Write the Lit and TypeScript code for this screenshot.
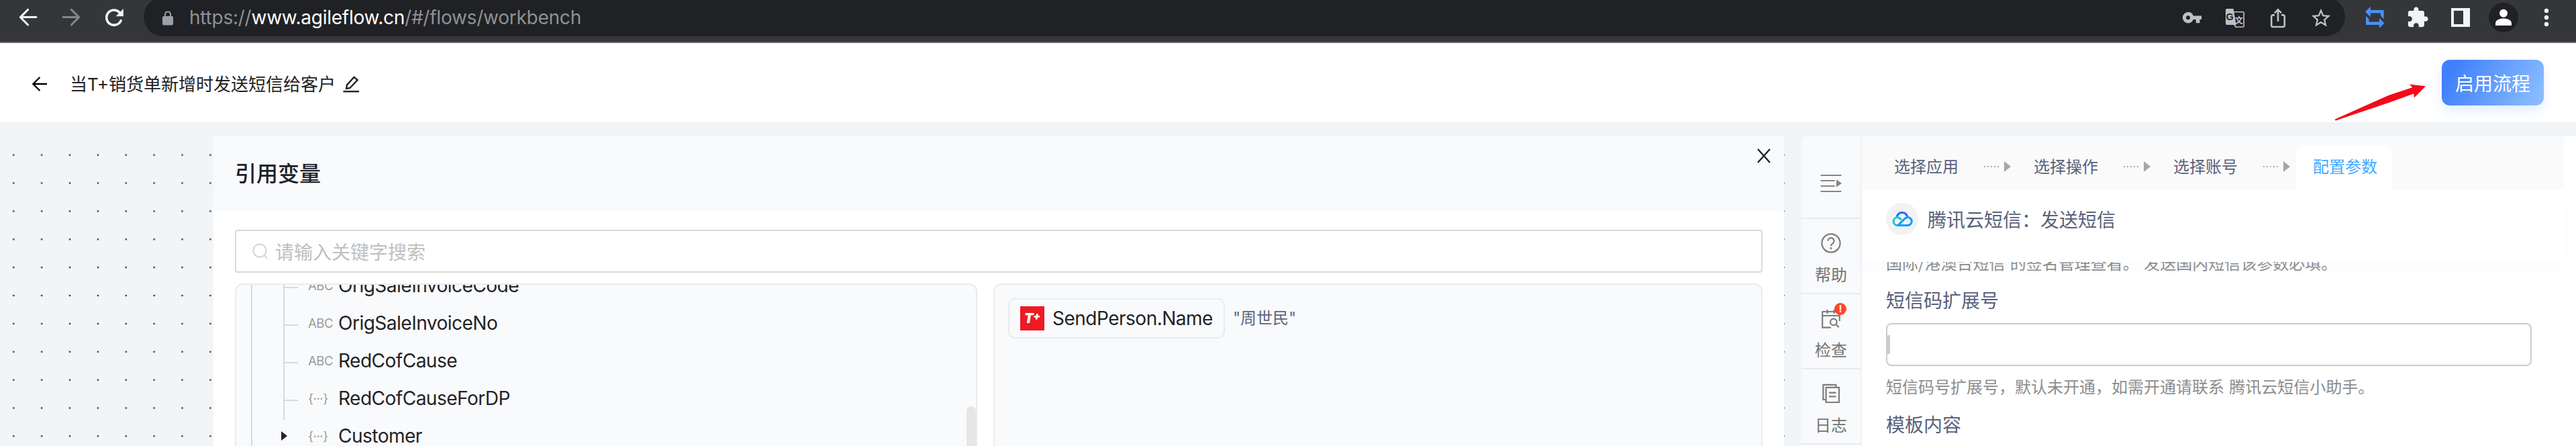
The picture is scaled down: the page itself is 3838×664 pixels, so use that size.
import { html, css, svg, LitElement } from "lit";
import { customElement, property } from "lit/decorators.js";
import { classMap } from "lit/directives/class-map.js";

const fields = [
  { type: "ABC", name: "OrigSaleInvoiceCode" },
  { type: "ABC", name: "OrigSaleInvoiceNo" },
  { type: "ABC", name: "RedCofCause" },
  { type: "{···}", name: "RedCofCauseForDP" },
];

const steps = ["选择应用", "选择操作", "选择账号", "配置参数"];

const helpIcon = svg`
  <circle cx="16" cy="16" r="13.6" />
  <path d="M11.6 12.8a4.5 4.5 0 1 1 7 3.6c-1.6 1.1-2.6 1.8-2.6 3.8" />
  <circle cx="16" cy="23.4" r="1.5" fill="currentColor" stroke="none" />
`;

const checkIcon = svg`
  <path d="M16 29.6H3.2V6H28.8V20" />
  <path d="M3.2 12H28.8M10.6 3V9M20.6 3V9" />
  <circle cx="19.8" cy="21.4" r="4.8" />
  <path d="M23.4 25l4.4 4.2" />
`;

const logIcon = svg`
  <path d="M8 25H4.4V2.9H23.4V6.6" />
  <path d="M8.6 6.9H28V29H8.6z" />
  <path d="M13 14.6H23.4M13 20.4H23.4" />
`;

@customElement("browser-bar")
export class BrowserBar extends LitElement {
  static styles = css`
    :host {
      display: flex;
      align-items: flex-start;
      box-sizing: border-box;
      height: 64px;
      background: #35363a;
      border-bottom: 2px solid #5f6064;
      color: #f1f3f4;
    }
    svg {
      display: block;
      fill: currentColor;
    }
    .nav {
      display: flex;
      gap: 32px;
      width: 188px;
      padding: 10px 0 0 26px;
    }
    .nav svg {
      width: 32px;
      height: 32px;
      fill: none;
      stroke: currentColor;
      stroke-width: 3;
      stroke-linecap: round;
      stroke-linejoin: round;
    }
    .disabled {
      color: #85868a;
    }
    .address {
      display: flex;
      align-items: center;
      box-sizing: border-box;
      width: 3280px;
      height: 58px;
      margin-top: -4px;
      padding: 0 19px 0 28px;
      border-radius: 29px;
      background: #202124;
      color: #bdc1c6;
    }
    .lock {
      width: 16px;
      height: 22px;
      margin-top: 4px;
      color: #9aa0a6;
    }
    .url {
      flex: 1;
      padding: 2px 0 0 24px;
      font: 28px/40px Inter, "Liberation Sans", sans-serif;
      letter-spacing: -0.24px;
      color: #8e9196;
    }
    .url b {
      font-weight: 400;
      color: #fff;
    }
    .actions,
    .extensions {
      display: flex;
      align-items: center;
      gap: 30px;
    }
    .actions {
      margin-top: 3px;
    }
    .extensions {
      height: 52px;
      padding-left: 27px;
    }
    .actions svg,
    .extensions svg {
      width: 34px;
      height: 34px;
    }
    .sync {
      color: #4a90f7;
    }
    .avatar {
      display: flex;
      align-items: center;
      justify-content: center;
      width: 44px;
      height: 44px;
      margin: 0 -5px;
      border-radius: 50%;
      background: #202124;
      color: #fff;
    }
    text {
      font-family: "Liberation Sans", "Noto Sans CJK SC", sans-serif;
      font-weight: 700;
    }
  `;

  render() {
    return html`
      <div class="nav">
        <svg viewBox="0 0 32 32">
          <path d="M28 15.6H4.6M15.6 4.4L4.4 15.6L15.6 27" />
        </svg>
        <svg class="disabled" viewBox="0 0 32 32">
          <path d="M4 15.6H27.4M16.4 4.4L27.6 15.6L16.4 27" />
        </svg>
        <svg viewBox="0 0 32 32">
          <path stroke-width="3.6" d="M26.2 20.6A11.2 11.2 0 1 1 24 8.4" />
          <path fill="currentColor" stroke="none" d="M29.8 3v11.2H18.6z" />
        </svg>
      </div>
      <div class="address">
        <svg class="lock" viewBox="0 0 16 22">
          <path
            d="M2 8h1V5.4a5 5 0 0 1 10 0V8h1a2 2 0 0 1 2 2v9.4a2 2 0 0 1-2 2H2a2 2 0 0 1-2-2V10a2 2 0 0 1 2-2zM5 8h6V5.4a3 3 0 0 0-6 0z"
          />
        </svg>
        <div class="url">https://<b>www.agileflow.cn</b>/#/flows/workbench</div>
        <div class="actions">
          <svg viewBox="0 0 34 34">
            <path
              fill-rule="evenodd"
              d="M11 8a8.2 8.2 0 0 1 7.8 5.4H31v5.6h-2.6v5.2h-5.6V19h-4A8.2 8.2 0 1 1 11 8zm0 5.2a3 3 0 1 0 0 6 3 3 0 0 0 0-6z"
            />
          </svg>
          <svg viewBox="0 0 34 34">
            <path d="M5 3h9.5l4.2 24H5a2 2 0 0 1-2-2V5a2 2 0 0 1 2-2z" />
            <path
              fill="none"
              stroke="currentColor"
              stroke-width="1.6"
              d="M15 7.8H28.4a1.8 1.8 0 0 1 1.8 1.8V28.4a1.8 1.8 0 0 1-1.8 1.8H18L15.6 26"
            />
            <text x="3.6" y="19.6" font-size="14.5" fill="#202124">G</text>
            <text x="16.4" y="24.6" font-size="12.5">文</text>
          </svg>
          <svg viewBox="0 0 34 34">
            <path
              fill="none"
              stroke="currentColor"
              stroke-width="2.6"
              d="M12 12.4H9.4a2.2 2.2 0 0 0-2.2 2.2V27.8a2.2 2.2 0 0 0 2.2 2.2H24.6a2.2 2.2 0 0 0 2.2-2.2V14.6a2.2 2.2 0 0 0-2.2-2.2H22M17 22V5M12 9.4l5-5 5 5"
            />
          </svg>
          <svg viewBox="0 0 24 24">
            <path
              d="M22 9.24l-7.19-.62L12 2 9.19 8.63 2 9.24l5.46 4.73L5.82 21 12 17.27 18.18 21l-1.63-7.03L22 9.24zM12 15.4l-3.76 2.27 1-4.28-3.32-2.88 4.38-.38L12 6.1l1.71 4.04 4.38.38-3.32 2.88 1 4.28L12 15.4z"
            />
          </svg>
        </div>
      </div>
      <div class="extensions">
        <svg class="sync" viewBox="0 0 34 34">
          <path d="M3 8.6L10.8 1V6H30.6V19.6L26 14.6V10.6H10.8V16.4z" />
          <path d="M31.4 25.6L24 33V28H4V14.6L8.6 19.4V23.4H24V18z" />
        </svg>
        <svg viewBox="0 0 24 24">
          <path
            d="M20.5 11H19V7c0-1.1-.9-2-2-2h-4V3.5C13 2.12 11.88 1 10.5 1S8 2.12 8 3.5V5H4c-1.1 0-1.99.9-1.99 2v3.8H3.5c1.49 0 2.7 1.21 2.7 2.7s-1.21 2.7-2.7 2.7H2V20c0 1.1.9 2 2 2h3.8v-1.5c0-1.49 1.21-2.7 2.7-2.7 1.49 0 2.7 1.21 2.7 2.7V22H17c1.1 0 2-.9 2-2v-4h1.5c1.38 0 2.5-1.12 2.5-2.5S21.88 11 20.5 11z"
          />
        </svg>
        <svg viewBox="0 0 34 34">
          <path fill-rule="evenodd" d="M3 3H31V31H3zM7 7V27H21V7z" />
        </svg>
        <div class="avatar">
          <svg viewBox="0 0 34 34">
            <circle cx="17" cy="10.8" r="6" />
            <path d="M5 29V25.6C5 21 11.4 18.6 17 18.6S29 21 29 25.6V29z" />
          </svg>
        </div>
        <svg viewBox="0 0 34 34">
          <circle cx="17" cy="7" r="3.2" />
          <circle cx="17" cy="17" r="3.2" />
          <circle cx="17" cy="27" r="3.2" />
        </svg>
      </div>
    `;
  }
}

@customElement("flow-header")
export class FlowHeader extends LitElement {
  static styles = css`
    :host {
      position: relative;
      display: flex;
      align-items: center;
      box-sizing: border-box;
      height: 118px;
      padding: 0 48px 0 46px;
      background: #fff;
      color: #222;
    }
    svg {
      display: block;
      fill: none;
      stroke: currentColor;
      stroke-width: 2.4;
    }
    .back {
      width: 26px;
      height: 26px;
      margin-top: 3px;
      color: #000;
    }
    .title {
      padding: 5px 10px 0 32px;
      font: 26px/36px Inter, "Noto Sans CJK SC", sans-serif;
    }
    .edit {
      width: 26px;
      height: 26px;
      margin-top: 4px;
    }
    .enable {
      width: 152px;
      height: 68px;
      margin-left: auto;
      padding: 0;
      border: 0;
      border-radius: 12px;
      background: linear-gradient(118deg, #4080fb 12%, #88bbff 92%);
      box-shadow: 0 8px 16px rgba(64, 128, 255, 0.14);
      font: 28px/64px "Noto Sans CJK SC", sans-serif;
      color: #fff;
    }
    .pointer {
      position: absolute;
      left: 3476px;
      top: 60px;
      width: 142px;
      height: 58px;
      fill: #f50a1a;
      stroke: none;
    }
  `;

  render() {
    return html`
      <svg class="back" viewBox="0 0 26 26">
        <path d="M24 13H3.6M13.4 3L3.4 13L13.4 23" />
      </svg>
      <div class="title">当T+销货单新增时发送短信给客户</div>
      <svg class="edit" viewBox="0 0 26 26">
        <path d="M1.4 24.2H25" />
        <path d="M17.6 2.8L22.6 7.2L11.4 19L6.2 20L6.8 14.6z" />
      </svg>
      <button class="enable">启用流程</button>
      <svg class="pointer" viewBox="0 0 142 58">
        <path d="M3 53.4L84 17.4L118 6.2L114 1.6L138 4.2L121 21.6L120.2 15.4L87 27.6L4 55.4L3 55z" />
      </svg>
    `;
  }
}

@customElement("variable-panel")
export class VariablePanel extends LitElement {
  static styles = css`
    :host {
      display: flex;
      flex-direction: column;
      width: 2340px;
      background: #fff;
      font-family: Inter, "Noto Sans CJK SC", sans-serif;
      color: #222326;
    }
    svg {
      display: block;
      fill: none;
      stroke: currentColor;
    }
    .head {
      display: flex;
      flex-shrink: 0;
      justify-content: space-between;
      box-sizing: border-box;
      height: 111px;
      padding: 0 20px 0 32px;
      background: #f9fafc;
    }
    .head h2 {
      margin: 0;
      font: 500 32px/106px "Noto Sans CJK SC", sans-serif;
      color: #1d2129;
    }
    .close {
      width: 20px;
      height: 22px;
      margin-top: 18px;
      stroke-width: 2.4;
    }
    .search {
      display: flex;
      flex-shrink: 0;
      align-items: center;
      box-sizing: border-box;
      height: 64px;
      margin: 28px 32px 16px;
      padding: 0 24px;
      border: 2px solid #d9d9d9;
      border-radius: 4px;
      font-size: 28px;
      color: #bfbfbf;
    }
    .search svg {
      width: 24px;
      height: 24px;
      margin-right: 10px;
      stroke-width: 1.8;
      color: #cfcfcf;
    }
    .columns {
      display: flex;
      flex-shrink: 0;
      gap: 24px;
      height: 280px;
      margin: 0 32px;
    }
    .tree,
    .picked {
      box-sizing: border-box;
      border: 2px solid #ebebeb;
      border-radius: 12px;
      background: #f9fafc;
      overflow: hidden;
    }
    .tree {
      display: flex;
      justify-content: space-between;
      width: 1106px;
      padding-left: 22px;
    }
    .level {
      border-left: 2px solid #d9d9d9;
    }
    .branch {
      margin: -27px 0 -4px 46px;
      padding-bottom: 4px;
      border-left: 2px solid #d9d9d9;
    }
    .row {
      display: flex;
      align-items: center;
      height: 56px;
      font-size: 28px;
      letter-spacing: -0.5px;
    }
    .tick {
      width: 20px;
      height: 2px;
      margin: 6px 15px 0 0;
      background: #d9d9d9;
    }
    .type {
      width: 45px;
      font-size: 18.5px;
      letter-spacing: -0.4px;
      color: #9a9a9a;
    }
    .caret {
      margin: 0 31px 0 43px;
      border-left: 9px solid #222326;
      border-top: 7px solid transparent;
      border-bottom: 7px solid transparent;
    }
    .thumb {
      width: 14px;
      margin-top: 181px;
      border-radius: 7px 7px 0 0;
      background: #e6e6e6;
    }
    .picked {
      display: flex;
      align-items: flex-start;
      flex: 1;
      padding: 20px;
    }
    .chip {
      display: flex;
      align-items: center;
      box-sizing: border-box;
      height: 60px;
      padding: 0 16px;
      border: 2px solid #ebebeb;
      border-radius: 10px;
      font-size: 28px;
      letter-spacing: -0.5px;
    }
    .logo {
      display: flex;
      align-items: center;
      justify-content: center;
      width: 36px;
      height: 36px;
      margin-right: 12px;
      background: #ed1b24;
      font: italic 900 20px/36px Inter, sans-serif;
      color: #fff;
    }
    .logo sup {
      font-size: 16px;
      line-height: 28px;
      align-self: flex-start;
    }
    .value {
      margin-left: 12px;
      font: 24px/60px Inter, "Noto Sans CJK SC", sans-serif;
      color: #5e6580;
    }
  `;

  render() {
    return html`
      <div class="head">
        <h2>引用变量</h2>
        <svg class="close" viewBox="0 0 20 22">
          <path d="M1 1L19 21M19 1L1 21" />
        </svg>
      </div>
      <div class="search">
        <svg viewBox="0 0 24 24">
          <circle cx="11" cy="11" r="9.6" />
          <path d="M17.8 18L22.6 23" />
        </svg>
        请输入关键字搜索
      </div>
      <div class="columns">
        <div class="tree">
          <div class="level">
            <div class="branch">
              ${fields.map(
                (field) => html`
                  <div class="row">
                    <span class="tick"></span>
                    <span class="type">${field.type}</span>
                    <span>${field.name}</span>
                  </div>
                `
              )}
            </div>
            <div class="row">
              <span class="caret"></span>
              <span class="type">{···}</span>
              <span>Customer</span>
            </div>
          </div>
          <div class="thumb"></div>
        </div>
        <div class="picked">
          <div class="chip">
            <span class="logo">T<sup>+</sup></span>
            <span>SendPerson.Name</span>
          </div>
          <span class="value">"周世民"</span>
        </div>
      </div>
    `;
  }
}

@customElement("side-tab")
export class SideTab extends LitElement {
  static styles = css`
    :host {
      display: flex;
      flex-direction: column;
      align-items: center;
      box-sizing: border-box;
      height: 112px;
      padding-top: 20px;
      border-bottom: 2px solid #e8eaed;
      font: 24px/36px "Noto Sans CJK SC", sans-serif;
      color: #737373;
    }
    .icon {
      position: relative;
      width: 32px;
      height: 32px;
      margin-bottom: 12px;
    }
    svg {
      display: block;
      fill: none;
      stroke: #7d7d7d;
      stroke-width: 2.2;
      color: #7d7d7d;
    }
    .badge {
      position: absolute;
      top: -7px;
      right: -7px;
      width: 18px;
      height: 18px;
      border-radius: 50%;
      background: #ff4528;
      font: 700 15px/18px Inter, sans-serif;
      text-align: center;
      color: #fff;
    }
  `;

  @property({ type: String })
  label = "";

  @property({ type: Boolean })
  alert = false;

  @property({ attribute: false })
  icon: unknown;

  render() {
    return html`
      <div class="icon">
        <svg width="32" height="32" viewBox="0 0 32 32">${this.icon}</svg>
        ${this.alert ? html`<span class="badge">!</span>` : ""}
      </div>
      <span>${this.label}</span>
    `;
  }
}

@customElement("config-panel")
export class ConfigPanel extends LitElement {
  static styles = css`
    :host {
      display: flex;
      flex: 1;
      margin-left: 26px;
      border-top-left-radius: 10px;
      background: #fff;
      overflow: hidden;
      font-family: "Noto Sans CJK SC", sans-serif;
      color: #59617a;
    }
    svg {
      display: block;
    }
    .tabs {
      box-sizing: border-box;
      width: 90px;
      border-right: 2px solid #eef2f6;
      background: #f9fafc;
    }
    .fold {
      display: flex;
      justify-content: center;
      box-sizing: border-box;
      height: 123px;
      padding-top: 56px;
      border-bottom: 2px solid #e8eaed;
    }
    .content {
      display: flex;
      flex-direction: column;
      width: 1046px;
    }
    .steps {
      display: flex;
      align-items: flex-end;
      height: 79px;
      padding-left: 24px;
      background: #fafafa;
      font-size: 24px;
    }
    .step {
      height: 66px;
      padding: 0 24px;
      line-height: 62px;
    }
    .current {
      margin-left: -1px;
      padding: 0 22px 0 25px;
      border-radius: 14px 14px 0 0;
      background: #fff;
      color: #40a9ff;
    }
    .next {
      display: flex;
      align-items: center;
      gap: 8px;
      width: 50px;
      height: 64px;
      padding: 0 0 2px 14px;
    }
    .dots {
      width: 22px;
      height: 2px;
      background: repeating-linear-gradient(90deg, #adadad 0 2px, transparent 2px 5px);
    }
    .arrow {
      border-left: 10px solid #a6a6a6;
      border-top: 8px solid transparent;
      border-bottom: 8px solid transparent;
    }
    .app {
      display: flex;
      align-items: center;
      gap: 14px;
      height: 88px;
      padding: 0 0 20px 36px;
      font-size: 28px;
      line-height: 40px;
      box-shadow: 0 8px 20px rgba(60, 120, 190, 0.03);
    }
    .app-logo {
      display: flex;
      align-items: center;
      justify-content: center;
      width: 48px;
      height: 48px;
      border-radius: 50%;
      background: #f2f2f3;
    }
    .form {
      flex: 1;
      padding: 0 48px 0 36px;
      overflow: hidden;
    }
    .hint {
      font-size: 24px;
      line-height: 36px;
      word-spacing: 2px;
      color: #8c8c8c;
    }
    .previous {
      margin: -17px 0 17px;
    }
    .label {
      font-size: 28px;
      line-height: 40px;
    }
    .input {
      display: flex;
      align-items: center;
      box-sizing: border-box;
      height: 64px;
      margin: 15px 0 12px;
      border: 2px solid #cccccc;
      border-radius: 8px;
    }
    .caret {
      width: 4px;
      height: 28px;
      background: #cccccc;
    }
    .input + .hint {
      margin-bottom: 18px;
    }
  `;

  private renderStep(step: string, index: number) {
    const current = index === steps.length - 1;
    return html`
      <div class=${classMap({ step: true, current })}>${step}</div>
      ${current
        ? ""
        : html`<div class="next"><span class="dots"></span><span class="arrow"></span></div>`}
    `;
  }

  render() {
    return html`
      <div class="tabs">
        <div class="fold">
          <svg width="32" height="28" viewBox="0 0 32 28" stroke="#858585" stroke-width="2.2" stroke-linecap="round">
            <path d="M1.4 2H30.6M1.4 10H21M1.4 18H21M1.4 26H30.6" />
            <path fill="#858585" stroke="none" d="M24 8.2L32 14L24 19.8z" />
          </svg>
        </div>
        <side-tab label="帮助" .icon=${helpIcon}></side-tab>
        <side-tab label="检查" alert .icon=${checkIcon}></side-tab>
        <side-tab label="日志" .icon=${logIcon}></side-tab>
      </div>
      <div class="content">
        <div class="steps">${steps.map((step, i) => this.renderStep(step, i))}</div>
        <div class="app">
          <span class="app-logo">
            <svg width="32" height="24" viewBox="0 0 32 24" fill="none" stroke-width="3">
              <path stroke="#1f6bff" d="M8 9.4C9.2 4.6 12 2.4 16 2.4C20 2.4 22.8 4.8 23.8 8.4" />
              <path stroke="#12c9c4" d="M14.8 13.2C12.8 11 10.6 9.6 8 9.6A6 6 0 0 0 8 21.4H12" />
              <path stroke="#0a9bff" d="M10 21.4L18.6 12.8C20.6 10.8 22.4 9.6 24.4 9.6A5.9 5.9 0 0 1 24.4 21.4H8.6" />
            </svg>
          </span>
          腾讯云短信：发送短信
        </div>
        <div class="form">
          <div class="hint previous">国际/港澳台短信 的签名管理查看。 发送国内短信该参数必填。</div>
          <div class="label">短信码扩展号</div>
          <div class="input"><span class="caret"></span></div>
          <div class="hint">短信码号扩展号，默认未开通，如需开通请联系 腾讯云短信小助手。</div>
          <div class="label">模板内容</div>
        </div>
      </div>
    `;
  }
}

@customElement("app-root")
export default class AppRoot extends LitElement {
  static styles = css`
    :host {
      display: flex;
      flex-direction: column;
      width: 3838px;
      height: 664px;
      background: #f1f5f8;
      overflow: hidden;
    }
    .canvas {
      display: flex;
      height: 461px;
      margin-top: 21px;
      padding-left: 318px;
      background-image: radial-gradient(circle, #33373d 1.1px, transparent 1.7px);
      background-size: 41.87px 41.87px;
      background-position: -0.6px 6.8px;
    }
  `;

  render() {
    return html`
      <browser-bar></browser-bar>
      <flow-header></flow-header>
      <div class="canvas">
        <variable-panel></variable-panel>
        <config-panel></config-panel>
      </div>
    `;
  }
}
